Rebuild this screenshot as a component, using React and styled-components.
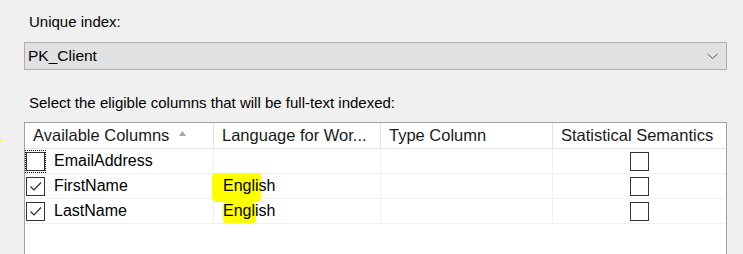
import React from "react";
import styled, { createGlobalStyle } from "styled-components";

const GlobalStyle = createGlobalStyle`
  html, body {
    margin: 0;
    padding: 0;
    background: #f0f0f0;
    overflow: hidden;
  }
  body {
    font-family: "Liberation Sans", Arial, sans-serif;
    font-size: 15px;
    color: #000;
  }
`;

const rows = [
  { name: "EmailAddress", checked: false, focused: true, language: "" },
  { name: "FirstName", checked: true, language: "English", mark: "wide" },
  { name: "LastName", checked: true, language: "English", mark: "narrow" },
];

const App = () => {
  return (
    <Page>
      <GlobalStyle />
      <StrayMark />
      <Label>Unique index:</Label>
      <Dropdown>
        <span>PK_Client</span>
        <svg width="11" height="7" viewBox="0 0 11 7">
          <path d="M0.5 0.8 L5.5 5.6 L10.5 0.8" fill="none" stroke="#555" strokeWidth="1" />
        </svg>
      </Dropdown>
      <Label $gap>Select the eligible columns that will be full-text indexed:</Label>
      <Grid>
        <HeaderCell>
          Available Columns
          <SortArrow viewBox="0 0 7 5" width="7" height="5">
            <path d="M3.5 0 L7 5 L0 5 Z" fill="#a6a6a6" />
          </SortArrow>
        </HeaderCell>
        <HeaderCell>Language for Wor...</HeaderCell>
        <HeaderCell>Type Column</HeaderCell>
        <HeaderCell $last>Statistical Semantics</HeaderCell>
        {rows.map((row) => (
          <React.Fragment key={row.name}>
            <Cell>
              <CheckWrap $focused={row.focused}>
                <Box checked={row.checked} />
              </CheckWrap>
              <CellText>{row.name}</CellText>
            </Cell>
            <Cell>
              {row.mark && <Highlight $kind={row.mark} />}
              <LangText>{row.language}</LangText>
            </Cell>
            <Cell />
            <Cell $center $last>
              <Box />
            </Cell>
          </React.Fragment>
        ))}
      </Grid>
    </Page>
  );
};

const Box = ({ checked }) => (
  <CheckBox>
    {checked && (
      <svg width="17" height="17" viewBox="0 0 17 17">
        <path d="M3.5 8.5 L7 12 L14 4.5" fill="none" stroke="#2a2a2a" strokeWidth="1.2" />
      </svg>
    )}
  </CheckBox>
);

export default App;

const Page = styled.div`
  position: relative;
  height: 254px;
  padding: 12px 16px 0 24px;
  box-sizing: border-box;
`;

const StrayMark = styled.div`
  position: absolute;
  left: 0;
  top: 139px;
  width: 2px;
  height: 3px;
  background: #ffff40;
`;

const Label = styled.div`
  height: 20px;
  line-height: 20px;
  padding-left: 5px;
  margin-top: ${({ $gap }) => ($gap ? "23px" : "0")};
  margin-bottom: ${({ $gap }) => ($gap ? "9px" : "10px")};
  white-space: nowrap;
`;

const Dropdown = styled.div`
  height: 28px;
  box-sizing: border-box;
  border: 1px solid #adadad;
  background: #e1e1e1;
  display: flex;
  align-items: center;
  justify-content: space-between;
  padding: 0 8px 0 3px;
  font-size: 15.5px;

  svg {
    margin-top: 1px;
  }
`;

const Grid = styled.div`
  display: grid;
  grid-template-columns: 189px 167px 172px 1fr;
  grid-template-rows: 26px repeat(3, 25px);
  align-content: start;
  height: 140px;
  background: #fff;
  border: 1px solid #a0a0a0;
  border-bottom: none;
  box-sizing: border-box;
  font-size: 16px;
`;

const HeaderCell = styled.div`
  display: flex;
  align-items: center;
  padding-left: 8px;
  border-right: ${({ $last }) => ($last ? "none" : "1px solid #e5e5e5")};
  border-bottom: 1px solid #e5e5e5;
  white-space: nowrap;
  color: #1a1a1a;
  overflow: hidden;
  font-size: 16.5px;
`;

const SortArrow = styled.svg`
  margin-left: 10px;
  margin-top: -4px;
`;

const Cell = styled.div`
  position: relative;
  display: flex;
  align-items: center;
  justify-content: ${({ $center }) => ($center ? "center" : "flex-start")};
  border-right: ${({ $last }) => ($last ? "none" : "1px solid #f0f0f0")};
  border-bottom: 1px solid #f0f0f0;
  white-space: nowrap;
`;

const CheckWrap = styled.div`
  display: flex;
  align-items: center;
  justify-content: center;
  width: 21px;
  height: 23px;
  box-sizing: border-box;
  border: 1px dotted ${({ $focused }) => ($focused ? "#000" : "transparent")};
`;

const CheckBox = styled.div`
  width: 19px;
  height: 19px;
  box-sizing: border-box;
  border: 1px solid #333;
  background: #fff;
  display: flex;
  align-items: center;
  justify-content: center;
`;

const CellText = styled.span`
  margin-left: 8px;
`;

const Highlight = styled.div`
  position: absolute;
  background: #ffff00;
  border-radius: 3px;
  left: ${({ $kind }) => ($kind === "wide" ? "-2px" : "9px")};
  width: ${({ $kind }) => ($kind === "wide" ? "49px" : "33px")};
  top: ${({ $kind }) => ($kind === "wide" ? "-1px" : "3px")};
  height: ${({ $kind }) => ($kind === "wide" ? "29px" : "21px")};
`;

const LangText = styled.span`
  position: relative;
  margin-left: 9px;
`;
